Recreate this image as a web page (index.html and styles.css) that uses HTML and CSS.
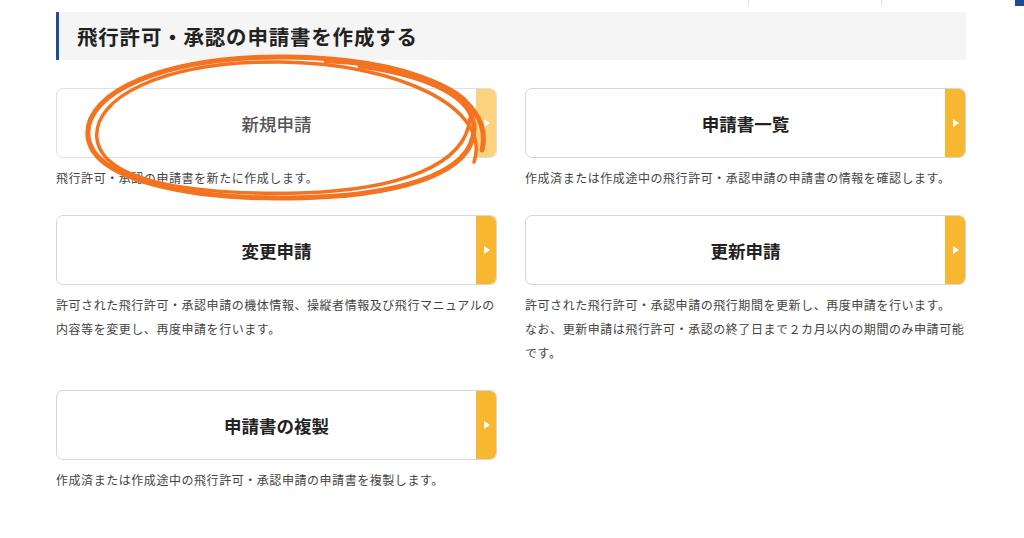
FILE: index.html
```html
<!DOCTYPE html>
<html lang="ja">
<head>
<meta charset="utf-8">
<title>飛行許可・承認の申請書を作成する</title>
<link rel="stylesheet" href="styles.css">
</head>
<body>
<div class="topnav">
  <span class="navitem"></span>
  <span class="navitem"></span>
  <span class="navblue"></span>
</div>
<main class="page">
  <h2 class="section-title">飛行許可・承認の申請書を作成する</h2>
  <div class="grid">
    <div class="item">
      <a class="card faded"><span class="card-label">新規申請</span><span class="card-arrow"><i class="tri"></i></span></a>
      <p class="desc">飛行許可・承認の申請書を新たに作成します。</p>
    </div>
    <div class="item">
      <a class="card"><span class="card-label">申請書一覧</span><span class="card-arrow"><i class="tri"></i></span></a>
      <p class="desc">作成済または作成途中の飛行許可・承認申請の申請書の情報を確認します。</p>
    </div>
    <div class="item">
      <a class="card"><span class="card-label">変更申請</span><span class="card-arrow"><i class="tri"></i></span></a>
      <p class="desc">許可された飛行許可・承認申請の機体情報、操縦者情報及び飛行マニュアルの内容等を変更し、再度申請を行います。</p>
    </div>
    <div class="item">
      <a class="card"><span class="card-label">更新申請</span><span class="card-arrow"><i class="tri"></i></span></a>
      <p class="desc">許可された飛行許可・承認申請の飛行期間を更新し、再度申請を行います。<br>なお、更新申請は飛行許可・承認の終了日まで２カ月以内の期間のみ申請可能です。</p>
    </div>
    <div class="item">
      <a class="card"><span class="card-label">申請書の複製</span><span class="card-arrow"><i class="tri"></i></span></a>
      <p class="desc">作成済または作成途中の飛行許可・承認申請の申請書を複製します。</p>
    </div>
  </div>
</main>
<svg class="annotation" width="1024" height="538" viewBox="0 0 1024 538">
  <g fill="none" stroke="#f37321" stroke-linecap="round">
    <path d="M482 150 C 496 92, 405 58, 285 57 C 165 56, 84 92, 88 136 C 92 180, 188 199, 290 198 C 392 197, 474 176, 474 128 C 474 98, 432 76, 360 66" stroke-width="5"/>
    <path d="M474 162 C 492 108, 398 63, 280 62 C 162 61, 92 98, 97 139 C 103 184, 200 195, 300 193 C 398 190, 466 166, 470 118" stroke-width="3.5"/>
    <path d="M325 62 C 384 64, 444 78, 466 100" stroke-width="2.5"/>
  </g>
</svg>
</body>
</html>
```
FILE: styles.css
```css
* { box-sizing: border-box; }
html, body { margin: 0; padding: 0; background: #fff; }
body {
  font-family: "Noto Sans CJK JP", "Noto Sans", sans-serif;
  color: #333;
  width: 1024px;
  height: 538px;
  overflow: hidden;
  position: relative;
}
.topnav {
  height: 6px;
  display: flex;
}
.navitem {
  width: 133px;
  border-left: 1px solid #e2e2e2;
}
.navitem:first-child { margin-left: 748px; }
.navblue {
  width: 9px;
  margin-left: 2px;
  background: #1d4b8f;
}
.page {
  padding: 6px 58px 0 56px;
}
.section-title {
  margin: 0;
  height: 48px;
  display: flex;
  align-items: center;
  padding-left: 18px;
  background: #f5f5f5;
  border-left: 3px solid #1e4f8f;
  font-size: 20.5px;
  font-weight: 700;
  color: #222;
  letter-spacing: 0.8px;
}
.grid {
  margin-top: 28px;
  display: grid;
  grid-template-columns: 441px 441px;
  column-gap: 28px;
  row-gap: 25px;
  align-items: start;
}
.card {
  display: flex;
  height: 70px;
  border: 1px solid #d6d6d6;
  border-radius: 7px;
  overflow: hidden;
  text-decoration: none;
  color: #222;
  background: #fff;
}
.card.faded { border-color: #e0e0e0; }
.card-label {
  flex: 1;
  display: flex;
  align-items: center;
  justify-content: center;
  padding-left: 20px;
  font-size: 17.5px;
  font-weight: 700;
}
.card.faded .card-label { font-weight: 500; color: #555; }
.card-arrow {
  width: 21px;
  margin: -1px -1px -1px 0;
  background: #f8b731;
  display: flex;
  align-items: center;
  justify-content: center;
}
.card.faded .card-arrow { background: #fcd27e; }
.tri {
  width: 0;
  height: 0;
  border-top: 4px solid transparent;
  border-bottom: 4px solid transparent;
  border-left: 6px solid #fff;
  margin-left: 1px;
}
.desc {
  margin: 8px 0 0;
  font-size: 12px;
  line-height: 24px;
  letter-spacing: 0.55px;
  color: #444;
}
.annotation {
  position: absolute;
  left: 0;
  top: 0;
  pointer-events: none;
}
```
